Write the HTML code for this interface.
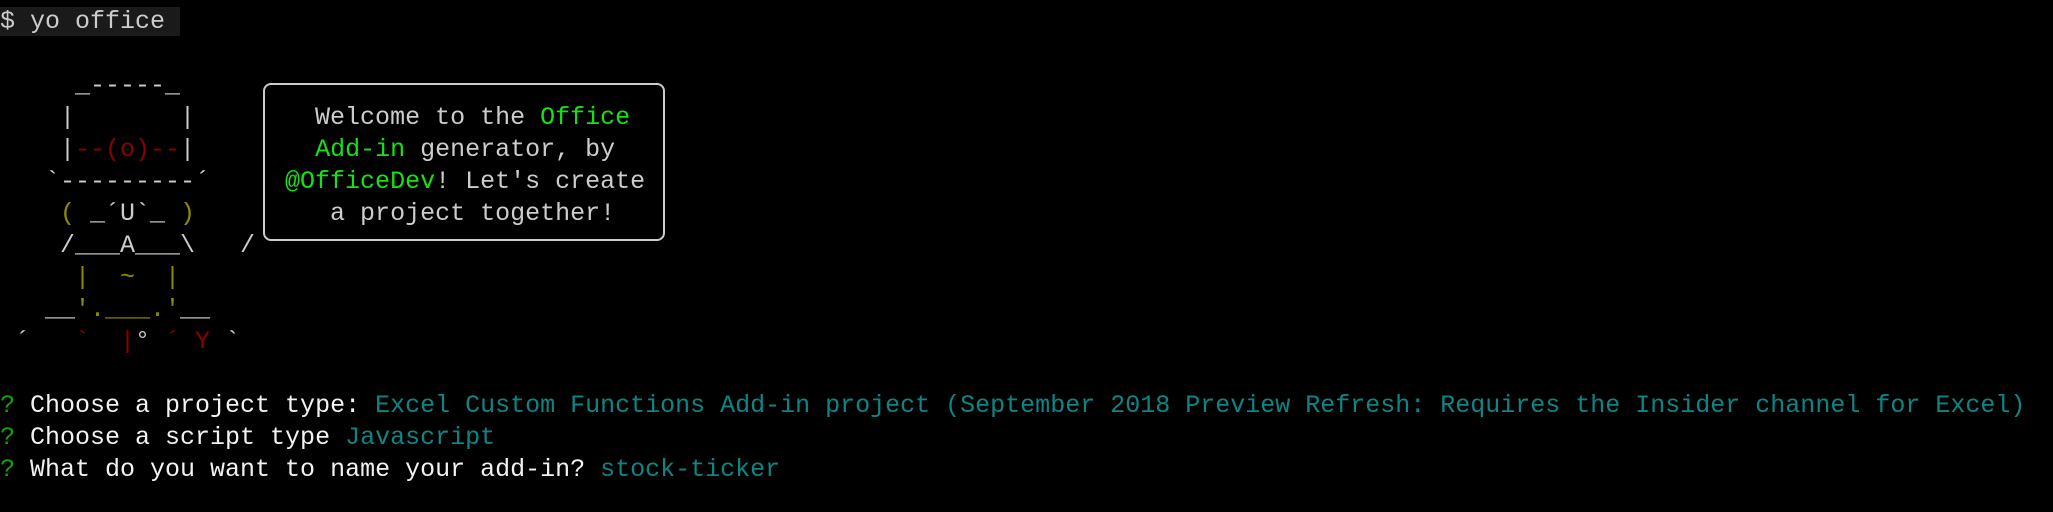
<!DOCTYPE html>
<html><head><meta charset="utf-8"><style>
html,body{margin:0;padding:0;background:#000;width:2053px;height:512px;overflow:hidden}
body{font-family:"Liberation Mono","DejaVu Sans Mono",monospace;font-size:25px;color:#cccccc;position:relative}
.r{position:absolute;left:0;height:32px;line-height:32px;white-space:pre}
.g{color:#16e016}.rd{color:#8b0000}.y{color:#8c8c00}.t{color:#0d8585}.w{color:#f2f2f2}.q{color:#13a10e}
.box{position:absolute;left:263px;top:83px;width:402px;height:158px;border:2px solid #cccccc;border-radius:8px;box-sizing:border-box}
</style></head><body>
<div class="r" style="top:6px"><span style="background:#1a1a1a">$ yo office </span></div>
<div class="r" style="top:70px">     _-----_</div>
<div class="r" style="top:102px">    |       |</div>
<div class="r" style="top:134px">    |<span class="rd">--(o)--</span>|</div>
<div class="r" style="top:166px">   `---------´</div>
<div class="r" style="top:198px">    <span class="y">( </span>_´U`_<span class="y"> )</span></div>
<div class="r" style="top:230px">    /___A___\   /</div>
<div class="r" style="top:262px">     <span class="y">|  ~  |</span></div>
<div class="r" style="top:294px">   __<span class="y">'.___.'</span>__</div>
<div class="r" style="top:326px"> ´   <span class="rd">`  |</span>° <span class="rd">´ Y</span> `</div>
<div class="box"></div>
<div class="r" style="top:102px">                     Welcome to the <span class="g">Office</span></div>
<div class="r" style="top:134px">                     <span class="g">Add-in</span> generator, by</div>
<div class="r" style="top:166px">                   <span class="g">@OfficeDev</span>! Let's create</div>
<div class="r" style="top:198px">                      a project together!</div>
<div class="r w" style="top:390px"><span class="q">?</span> Choose a project type: <span class="t">Excel Custom Functions Add-in project (September 2018 Preview Refresh: Requires the Insider channel for Excel)</span></div>
<div class="r w" style="top:422px"><span class="q">?</span> Choose a script type <span class="t">Javascript</span></div>
<div class="r w" style="top:454px"><span class="q">?</span> What do you want to name your add-in? <span class="t">stock-ticker</span></div>
</body></html>
